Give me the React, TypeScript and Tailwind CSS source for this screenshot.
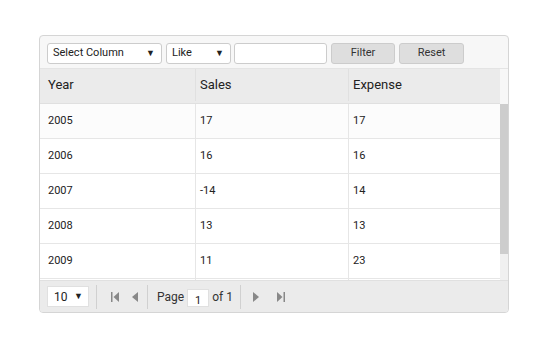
import { useState } from "react";

const rows = [
  { year: "2005", sales: "17", expense: "17" },
  { year: "2006", sales: "16", expense: "16" },
  { year: "2007", sales: "-14", expense: "14" },
  { year: "2008", sales: "13", expense: "13" },
  { year: "2009", sales: "11", expense: "23" },
];

function Caret() {
  return <span className="text-[9px] leading-none text-[#222]">▼</span>;
}

export default function App() {
  const [query, setQuery] = useState("");

  return (
    <div className="h-[350px] w-[550px] bg-white pl-[39px] pt-[35px] font-['Roboto',sans-serif] text-[#222]">
      <div className="flex h-[278px] w-[470px] flex-col overflow-hidden rounded-[4px] border border-[#d5d5d5] bg-[#f7f7f7]">
        {/* toolbar */}
        <div className="flex h-[32px] items-center px-[7px] pt-[3px] text-[11px]">
          <div className="flex h-[21px] w-[115px] items-center justify-between rounded-[3px] border border-[#ccc] bg-white pl-[5px] pr-[6px]">
            <span>Select Column</span>
            <Caret />
          </div>
          <div className="ml-[4px] flex h-[21px] w-[65px] items-center justify-between rounded-[3px] border border-[#ccc] bg-white pl-[5px] pr-[6px]">
            <span>Like</span>
            <Caret />
          </div>
          <input
            value={query}
            onChange={(event) => setQuery(event.target.value)}
            className="ml-[3px] h-[21px] w-[93px] rounded-[3px] border border-[#ccc] bg-white px-1 outline-none"
          />
          <button className="ml-[4px] h-[21px] w-[64px] rounded-[3px] border border-[#ccc] bg-[#dedede] text-[11px] text-[#333]">
            Filter
          </button>
          <button className="ml-[4px] h-[21px] w-[65px] rounded-[3px] border border-[#ccc] bg-[#dedede] text-[11px] text-[#333]">
            Reset
          </button>
        </div>

        {/* grid */}
        <div className="flex h-[212px] border-t border-[#e4e4e4]">
          <div className="flex-1 overflow-hidden">
            <div className="grid h-[35px] grid-cols-[156px_153px_1fr] border-b border-[#e0e0e0] bg-[#ebebeb] pb-[2px] text-[13px]">
              <div className="flex items-center border-r border-[#e0e0e0] pl-[8px]">Year</div>
              <div className="flex items-center border-r border-[#e0e0e0] pl-[4px]">Sales</div>
              <div className="flex items-center pl-[4px]">Expense</div>
            </div>
            {rows.map((row, i) => (
              <div
                key={row.year}
                className={`grid h-[35px] grid-cols-[156px_153px_1fr] border-b border-[#e6e6e6] text-[11px] ${
                  i === 0 ? "bg-[#fcfcfc]" : "bg-white"
                }`}
              >
                <div className="flex items-center border-r border-[#e6e6e6] pl-[8px]">{row.year}</div>
                <div className="flex items-center border-r border-[#e6e6e6] pl-[4px]">{row.sales}</div>
                <div className="flex items-center pl-[4px]">{row.expense}</div>
              </div>
            ))}
            <div className="grid h-[35px] grid-cols-[156px_153px_1fr] bg-white">
              <div className="border-r border-[#e6e6e6]" />
              <div className="border-r border-[#e6e6e6]" />
              <div />
            </div>
          </div>
          <div className="flex w-[8px] flex-col bg-[#f0f0f0]">
            <div className="h-[35px] bg-[#f7f7f7]" />
            <div className="h-[150px] bg-[#cdcdcd]" />
          </div>
        </div>

        {/* pager */}
        <div className="flex flex-1 items-center border-t border-[#e0e0e0] bg-[#ebebeb] pl-[7px] text-[12px]">
          <div className="flex h-[21px] w-[42px] items-center justify-between border border-[#e0e0e0] bg-white pl-[6px] pr-[5px]">
            <span>10</span>
            <Caret />
          </div>
          <div className="ml-[7px] mr-[8px] h-[24px] w-px bg-[#d0d0d0]" />
          <div className="flex items-center gap-[13px] px-[6px] text-[#888]">
            <svg width="8" height="10" viewBox="0 0 8 10"><rect x="0" y="0" width="1.5" height="10" fill="currentColor" /><path d="M8 0 L2.5 5 L8 10Z" fill="currentColor" /></svg>
            <svg width="6" height="10" viewBox="0 0 6 10"><path d="M6 0 L0 5 L6 10Z" fill="currentColor" /></svg>
          </div>
          <div className="ml-[3px] mr-[9px] h-[24px] w-px bg-[#d0d0d0]" />
          <span className="text-[#333]">Page</span>
          <div className="mx-[3px] mt-[2px] h-[18px] w-[22px] border border-[#e0e0e0] bg-white pt-[5px] text-center text-[11px] leading-[11px]">1</div>
          <span className="text-[#333]">of 1</span>
          <div className="ml-[7px] mr-[8px] h-[24px] w-px bg-[#d0d0d0]" />
          <div className="flex items-center gap-[18px] px-[4px] text-[#888]">
            <svg width="6" height="10" viewBox="0 0 6 10"><path d="M0 0 L6 5 L0 10Z" fill="currentColor" /></svg>
            <svg width="8" height="10" viewBox="0 0 8 10"><path d="M0 0 L5.5 5 L0 10Z" fill="currentColor" /><rect x="6.5" y="0" width="1.5" height="10" fill="currentColor" /></svg>
          </div>
        </div>
      </div>
    </div>
  );
}
